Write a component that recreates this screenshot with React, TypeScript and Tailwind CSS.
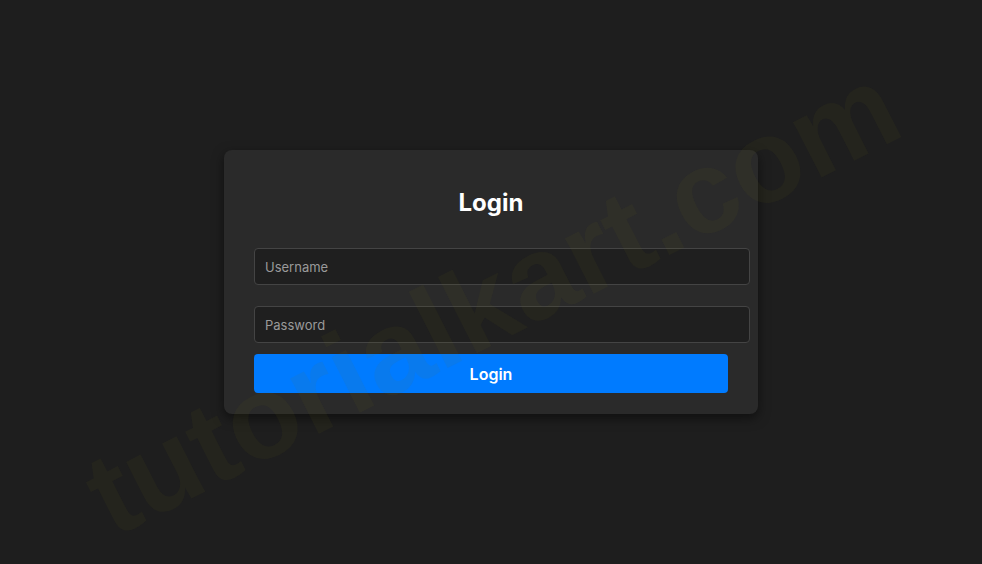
import React from 'react'

export default function App() {
  return (
    <div
      className="relative h-[564px] w-full overflow-hidden bg-[#1e1e1e]"
      style={{ fontFamily: 'Inter, "Liberation Sans", sans-serif' }}
    >
      <div className="flex justify-center pt-[150px]">
        <div className="w-[534px] rounded-lg bg-[#2a2a2a] px-[30px] pt-[37px] pb-[21px] shadow-[0_4px_12px_rgba(0,0,0,0.5)]">
          <h2 className="mb-[29px] text-center text-[24px] leading-8 font-bold text-white">Login</h2>
          <input
            type="text"
            placeholder="Username"
            className="mb-[21px] block h-[37px] w-[496px] rounded border border-[#444] bg-[#1f1f1f] px-[10px] text-[13px] text-white placeholder:text-[#9a9a9a] outline-none"
          />
          <input
            type="password"
            placeholder="Password"
            className="mb-[11px] block h-[37px] w-[496px] rounded border border-[#444] bg-[#1f1f1f] px-[10px] text-[13px] text-white placeholder:text-[#9a9a9a] outline-none"
          />
          <button className="block h-[39px] w-full rounded bg-[#007bff] text-[16px] font-semibold text-white">
            Login
          </button>
        </div>
      </div>

      {/* watermark */}
      <div
        className="pointer-events-none absolute top-[300px] left-[492px] -translate-x-1/2 -translate-y-1/2 -rotate-[27deg] whitespace-nowrap text-[118px] font-bold text-[rgba(110,110,20,0.08)]"
        style={{ fontFamily: '"Liberation Sans", Arial, sans-serif' }}
      >
        tutorialkart.com
      </div>
    </div>
  )
}
